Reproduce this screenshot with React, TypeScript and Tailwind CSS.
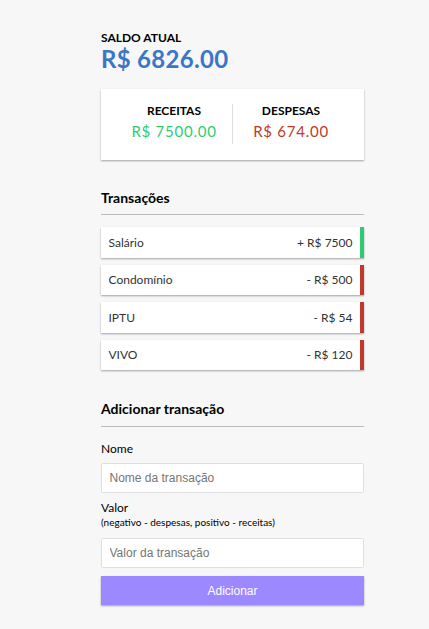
import React from "react";

const items = [
  { name: "Salário", amount: "+ R$ 7500", plus: true },
  { name: "Condomínio", amount: "- R$ 500", plus: false },
  { name: "IPTU", amount: "- R$ 54", plus: false },
  { name: "VIVO", amount: "- R$ 120", plus: false },
];

const shadow = "shadow-[0_1px_2.25px_rgba(0,0,0,0.12),0_1px_1.5px_rgba(0,0,0,0.24)]";

export default function App() {
  return (
    <div className="min-h-[629px] bg-[#f7f7f7] font-['Lato',sans-serif] text-black">
      <div className="ml-[101px] w-[263px] pt-[31px] pb-[20px]">
        <h4 className="m-0 text-[12px] leading-[14.4px] font-bold uppercase">Saldo atual</h4>
        <h1 className="m-0 text-[24px] leading-[28.8px] font-bold tracking-[0.3px] text-[#3a76c8]">R$ 6826.00</h1>

        <div className={`mt-[15px] flex bg-white p-[15px] pb-[16px] ${shadow}`}>
          <div className="flex-1 border-r border-[#dedede] text-center">
            <h4 className="m-0 text-[12px] leading-[14.4px] font-bold uppercase">Receitas</h4>
            <p className="my-[3.75px] text-[15px] leading-[18px] font-normal tracking-[0.75px] text-[#2ecc71]">R$ 7500.00</p>
          </div>
          <div className="flex-1 text-center">
            <h4 className="m-0 text-[12px] leading-[14.4px] font-bold uppercase">Despesas</h4>
            <p className="my-[3.75px] text-[15px] leading-[18px] font-normal tracking-[0.75px] text-[#c0392b]">R$ 674.00</p>
          </div>
        </div>

        <h3 className="mt-[30px] border-b border-[#bbb] pb-[7.5px] text-[14px] leading-[16.8px] font-bold">Transações</h3>
        <ul className="mt-[12px] flex flex-col gap-[7px]">
          {items.map((it) => (
            <li
              key={it.name}
              className={`flex h-[30.5px] items-center justify-between bg-white pl-[7.5px] pr-[7.5px] text-[12px] font-normal text-[#333] ${shadow} ${
                it.plus ? "border-r-[4px] border-[#2ecc71]" : "border-r-[4px] border-[#c0392b]"
              }`}
            >
              <span>{it.name}</span>
              <span>{it.amount}</span>
            </li>
          ))}
        </ul>

        <h3 className="mt-[31px] border-b border-[#bbb] pb-[7.5px] text-[14px] leading-[16.8px] font-bold">Adicionar transação</h3>
        <div className="mt-[15.5px]">
          <label className="block text-[12px] leading-[14.4px] font-normal">Nome</label>
          <input
            type="text"
            placeholder="Nome da transação"
            className="mt-[6px] block h-[30px] w-full rounded-[1.5px] border-[0.75px] border-[#dedede] bg-white px-[7.5px] font-['Liberation_Sans',Arial,sans-serif] text-[12px] outline-none placeholder:text-[#757575]"
          />
        </div>
        <div className="mt-[8px]">
          <label className="block text-[12px] leading-[14.4px] font-normal">
            Valor
            <br />
            <small className="text-[10px]">(negativo - despesas, positivo - receitas)</small>
          </label>
          <input
            type="text"
            placeholder="Valor da transação"
            className="mt-[9px] block h-[30px] w-full rounded-[1.5px] border-[0.75px] border-[#dedede] bg-white px-[7.5px] font-['Liberation_Sans',Arial,sans-serif] text-[12px] outline-none placeholder:text-[#757575]"
          />
        </div>
        <button
          className={`mt-[8px] block h-[29px] w-full bg-[#9c88ff] font-['Liberation_Sans',Arial,sans-serif] text-[12px] text-white ${shadow}`}
        >
          Adicionar
        </button>
      </div>
    </div>
  );
}
